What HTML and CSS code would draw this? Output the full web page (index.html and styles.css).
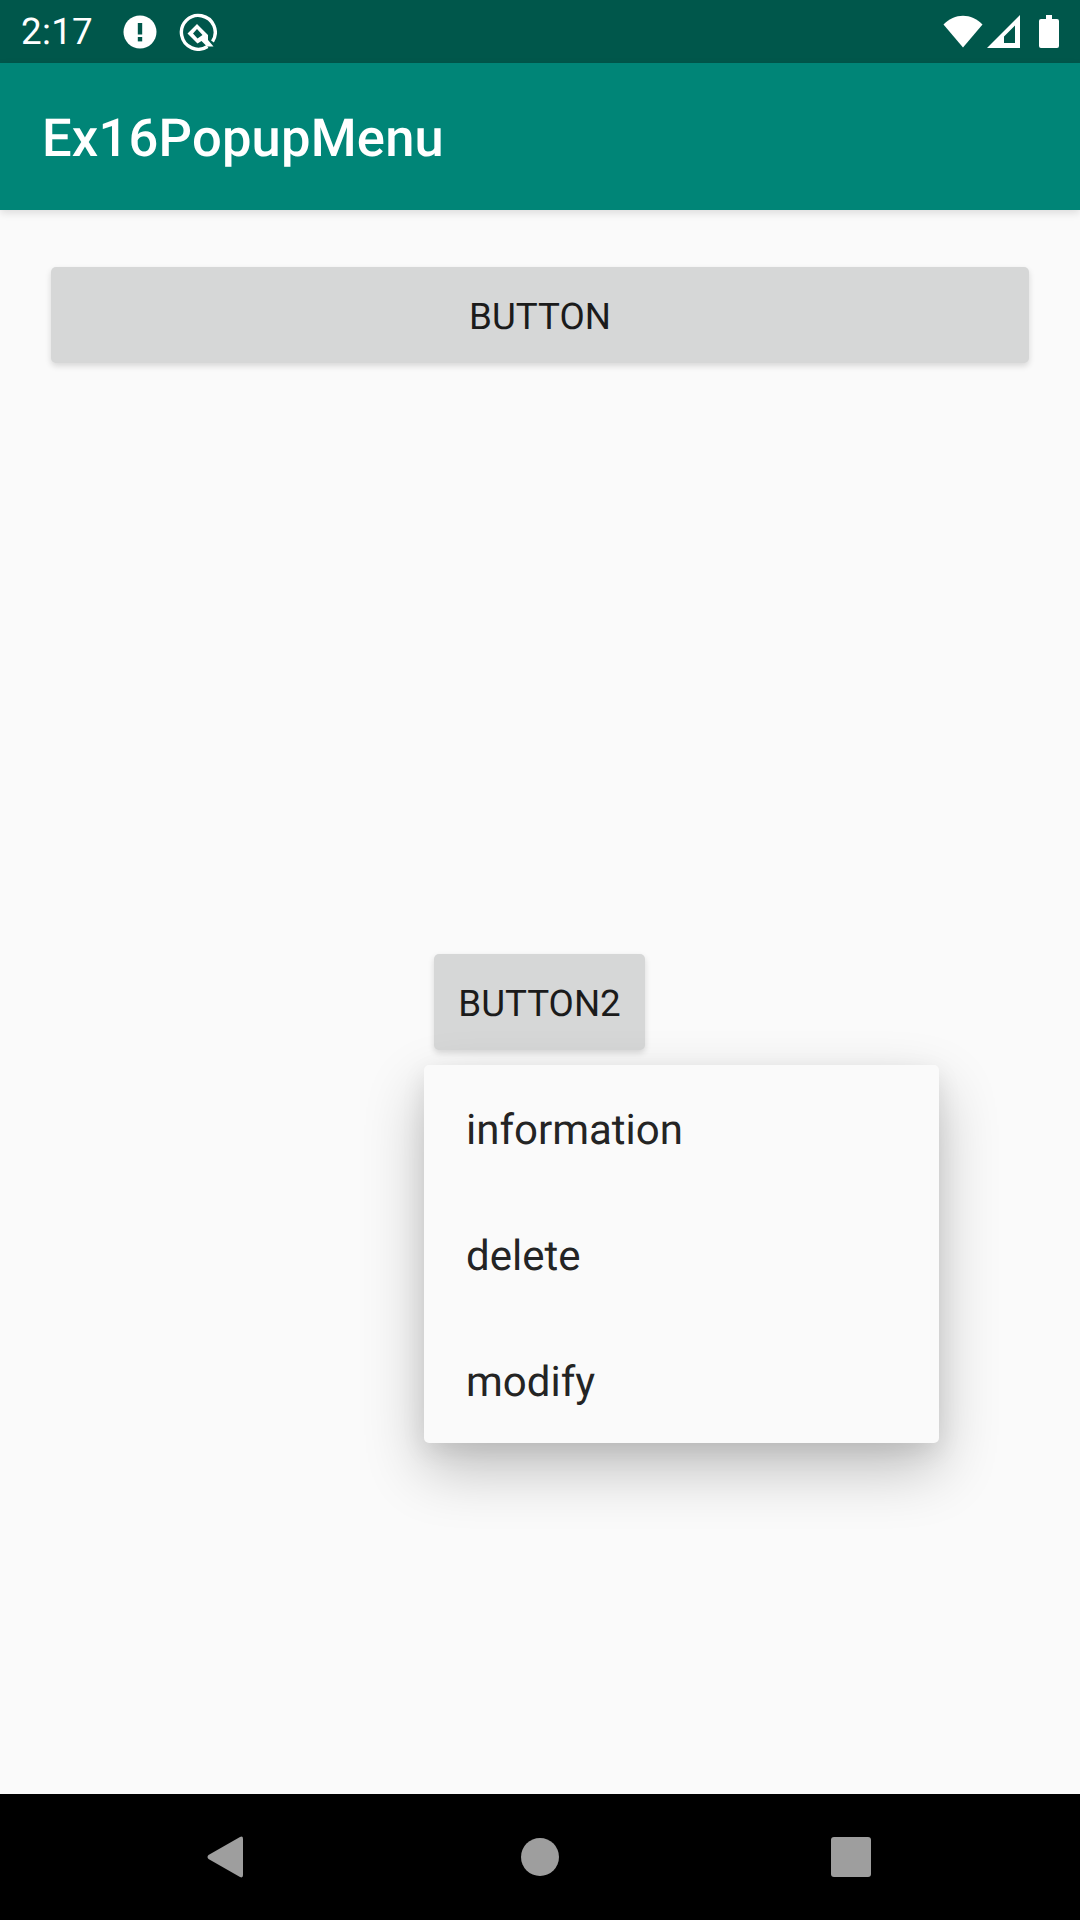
FILE: index.html
```html
<!DOCTYPE html>
<html lang="en">
<head>
  <meta charset="UTF-8" />
  <title>Ex16PopupMenu</title>
  <meta name="viewport" content="width=device-width, initial-scale=1.0" />
  <link rel="stylesheet" href="styles.css">
</head>
<body>
  <div class="screen">
    <div class="status-bar">
      <span class="clock">2:17</span>
      <svg class="icon-alert" width="34" height="34" viewBox="0 0 34 34">
        <circle cx="17" cy="17" r="16.5" fill="#fff" />
        <rect x="14.8" y="8" width="4.4" height="11.5" fill="#00574b" />
        <rect x="14.8" y="22" width="4.4" height="4.4" fill="#00574b" />
      </svg>
      <svg class="icon-q" width="38" height="38" viewBox="0 0 38 38">
        <path d="M28.5 33.5A16.9 16.9 0 1 1 33.5 28.5" fill="none" stroke="#fff" stroke-width="3.4" />
        <path d="M8.5 20.5 18 11 29 22V27L34.5 33.5H28L22.5 28 18.5 30.5ZM14 20.5 18.5 25.5 23.5 22 18 16Z" fill="#fff" fill-rule="evenodd" />
      </svg>
      <span class="status-gap"></span>
      <svg class="icon-wifi" width="40" height="33" viewBox="0 0 40 33">
        <path d="M0.5 9.5C11.5 -2.2 28.5 -2.2 39.5 9.5L20 32.5Z" fill="#fff" />
      </svg>
      <svg class="icon-signal" width="33" height="33" viewBox="0 0 33 33">
        <path d="M0 33 33 0V33ZM17 28H28V10.5L17 21.5Z" fill="#fff" fill-rule="evenodd" />
      </svg>
      <svg class="icon-battery" width="20" height="33" viewBox="0 0 20 33">
        <path d="M7 0H13V4H18Q20 4 20 6V31Q20 33 18 33H2Q0 33 0 31V6Q0 4 2 4H7Z" fill="#fff" />
      </svg>
    </div>

    <header class="app-bar">Ex16PopupMenu</header>

    <main class="content">
      <button class="btn btn-wide">BUTTON</button>
      <button class="btn btn-small">BUTTON2</button>

      <ul class="popup-menu">
        <li>information</li>
        <li>delete</li>
        <li>modify</li>
      </ul>
    </main>

    <nav class="nav-bar">
      <svg class="nav-back" width="36" height="42" viewBox="0 0 36 42">
        <path d="M33 1 1.5 19Q-0.5 21 1.5 23L33 41Q36 42.5 36 39V3Q36 -0.5 33 1Z" fill="#9e9e9e" />
      </svg>
      <span class="nav-home"></span>
      <span class="nav-recent"></span>
    </nav>
  </div>
</body>
</html>
```

FILE: styles.css
```css
* {
  box-sizing: border-box;
  margin: 0;
  padding: 0;
}

body {
  background-color: #fafafa;
  font-family: Roboto, 'Noto Sans', sans-serif;
  text-rendering: geometricPrecision;
}

.screen {
  width: 1080px;
  height: 1920px;
  display: flex;
  flex-direction: column;
  overflow: hidden;
}

/* Status bar */
.status-bar {
  height: 63px;
  background-color: #00574b;
  color: #fff;
  display: flex;
  align-items: center;
  padding: 0 21px;
}

.clock {
  font-size: 36.75px;
  letter-spacing: 0.3px;
  width: 102px;
}

.icon-q {
  margin-left: 22px;
}

.status-gap {
  flex: 1;
}

.icon-signal {
  margin-left: 4px;
}

.icon-battery {
  margin-left: 19px;
}

/* App bar */
.app-bar {
  height: 147px;
  background-color: #008577;
  color: #fff;
  font-size: 52.5px;
  font-weight: 500;
  letter-spacing: 0.2px;
  display: flex;
  align-items: center;
  padding: 3px 0 0 42px;
  box-shadow: 0 3px 8px rgba(0, 0, 0, 0.12);
  position: relative;
}

/* Content */
.content {
  flex: 1;
  position: relative;
  display: flex;
  flex-direction: column;
  align-items: center;
  padding: 57px 51px 0;
}

.btn {
  height: 96px;
  padding-top: 2px;
  border: none;
  border-radius: 5px;
  background-color: #d6d7d7;
  color: #1b1b1b;
  font-family: Roboto, sans-serif;
  font-size: 36.75px;
  font-weight: 450;
  text-rendering: geometricPrecision;
  box-shadow: 0 3px 6px rgba(0, 0, 0, 0.14);
}

.btn-wide {
  width: 100%;
}

.btn-small {
  width: 211px;
  margin-top: 591px;
  margin-right: 1px;
}

/* Popup menu */
.popup-menu {
  position: absolute;
  left: 424px;
  top: 855px;
  width: 515px;
  list-style: none;
  background-color: #fafafa;
  border-radius: 5px;
  box-shadow: 0 26px 60px rgba(0, 0, 0, 0.24), 0 8px 24px rgba(0, 0, 0, 0.08);
}

.popup-menu li {
  height: 126px;
  display: flex;
  align-items: center;
  padding: 4px 0 0 42px;
  font-size: 42px;
  color: #242424;
}

/* Navigation bar */
.nav-bar {
  height: 126px;
  background-color: #000;
  display: flex;
  align-items: center;
  padding-left: 207px;
}

.nav-home {
  width: 38px;
  height: 38px;
  margin-left: 278px;
  border-radius: 50%;
  background-color: #9e9e9e;
}

.nav-recent {
  width: 40px;
  height: 40px;
  margin-left: 272px;
  border-radius: 3px;
  background-color: #9e9e9e;
}
```
